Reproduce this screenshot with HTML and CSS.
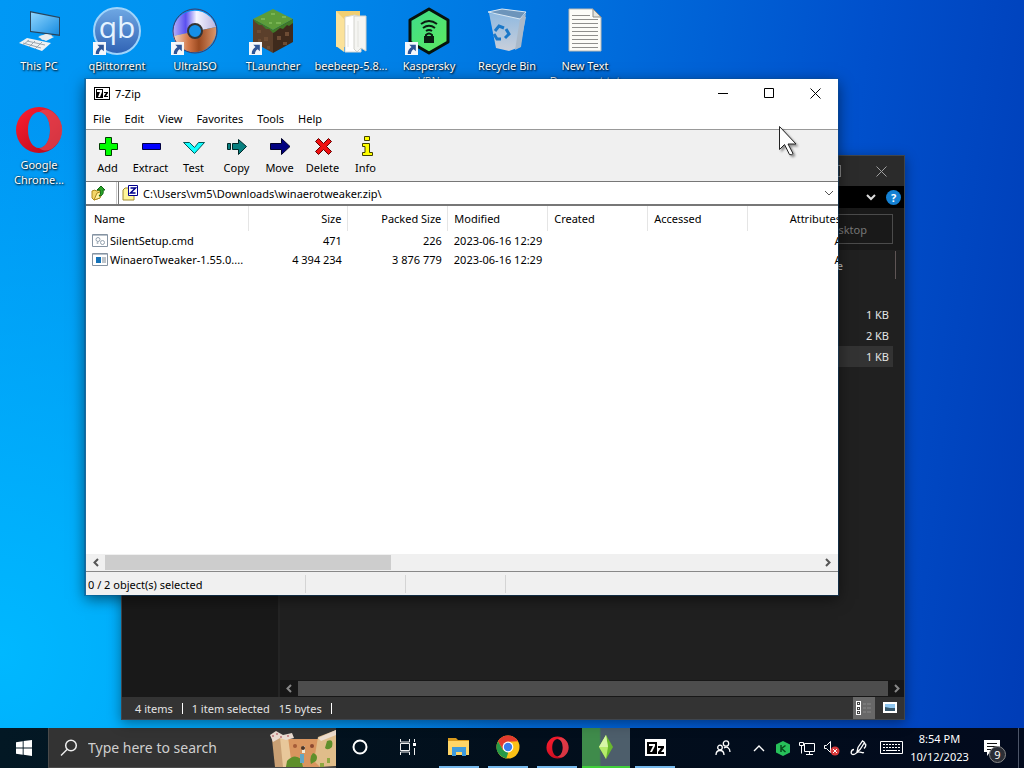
FILE: index.html
```html
<!DOCTYPE html>
<html lang="en">
<head>
<meta charset="utf-8">
<title>Desktop</title>
<link rel="stylesheet" href="styles.css">
</head>
<body class="screen">
<svg class="defs" aria-hidden="true">
  <defs>
    <linearGradient id="monitor" x1="0" y1="0" x2="1" y2="1"><stop offset="0" stop-color="#8fd6ff"/><stop offset="1" stop-color="#168be0"/></linearGradient>
    <linearGradient id="qbg" x1="0" y1="0" x2="0" y2="1"><stop offset="0" stop-color="#6fa8e4"/><stop offset="1" stop-color="#2f62b4"/></linearGradient>
    <linearGradient id="operag" x1="0" y1="0" x2="1" y2="1"><stop offset="0" stop-color="#ff1f30"/><stop offset="1" stop-color="#b0061a"/></linearGradient>
    <linearGradient id="discTop" x1="0" y1="0" x2="1" y2="0"><stop offset="0" stop-color="#b9b4fa"/><stop offset=".3" stop-color="#5a4ff0"/><stop offset=".55" stop-color="#f4f4ff"/><stop offset="1" stop-color="#b9b4df"/></linearGradient>
    <linearGradient id="discLow" x1="0" y1="0" x2="1" y2="0"><stop offset="0" stop-color="#f3ddd2"/><stop offset=".35" stop-color="#d4794a"/><stop offset=".6" stop-color="#9c4a20"/><stop offset="1" stop-color="#d9976d"/></linearGradient>
    <linearGradient id="kasp" x1="0" y1="0" x2="1" y2="1"><stop offset="0" stop-color="#3ddc8c"/><stop offset="1" stop-color="#5fe85c"/></linearGradient>
    <linearGradient id="bin" x1="0" y1="0" x2="0" y2="1"><stop offset="0" stop-color="#8fb9e0"/><stop offset="1" stop-color="#c9cfda"/></linearGradient>
    <symbol id="shortcut" viewBox="0 0 12 12"><rect width="12" height="12" fill="#f4f7fb"/><path d="M4 2.500h6v6L8 6.600C6.500 7.500 5.500 9 5.500 11H2.500C2.500 8 4 6 6 4.700z" fill="#2f5597"/></symbol>
    <symbol id="opera" viewBox="0 0 48 48"><path fill-rule="evenodd" fill="url(#operag)" d="M24 1a23 23 0 1 0 0 46 23 23 0 1 0 0-46zM24 6c6.500 0 11 8 11 18s-4.500 18-11 18-11-8-11-18 4.500-18 11-18z"/><path fill="#e8545c" opacity=".6" d="M24 6c5-4 11-3 15 1 11 9 11 25 0 34-4 4-10 5-15 1 6.500 0 11-8 11-18S30.500 6 24 6z"/></symbol>
    <symbol id="sevenzip" viewBox="0 0 16 13"><rect width="16" height="13" fill="#000"/><rect x="1" y="1" width="14" height="11" fill="#fff"/><rect x="2" y="2" width="7" height="9" fill="#000"/><path d="M3 3h5v2L6 10H4l2-5H3z" fill="#fff"/><path d="M10 5h4v1l-2 3h2v1h-4V9l2-3h-2z" fill="#000"/></symbol>
    <symbol id="sevenzipBare" viewBox="0 0 21 17"><rect width="21" height="17" fill="#fff"/><rect x="2" y="3" width="10" height="12" fill="#000"/><path d="M4 5h6v2l-3 6H5l3-6H4z" fill="#fff"/><path d="M13 7h6v2l-3 4h3v2h-6v-2l3-4h-3z" fill="#000"/></symbol>
  </defs>
</svg>

<main class="desktop">
  <div class="icons">
    <a class="shortcut" href="#pc"><svg class="pic" viewBox="0 0 48 48"><path d="M15 4l30 6v19l-30-4z" fill="#28455d"/><path d="M16 5.500l28 5.500v16.500L16 24z" fill="url(#monitor)"/><path d="M24 29l8-2 5 1-2 4-8 1z" fill="#cfd6dc"/><path d="M23 30l8-3 8 3-8 4z" fill="#e8ecef"/><path d="M4 36l8-5 24 5-9 8z" fill="#eef1f3"/><path d="M8 36l18 5M12 34l18 4M14 33l-6 5M20 34l-6 6M27 35l-7 7" stroke="#9aa6b0"/></svg><span>This PC</span></a>
    <a class="shortcut" href="#qb"><svg class="pic" viewBox="0 0 48 48"><circle cx="24" cy="24" r="23" fill="url(#qbg)" stroke="#9fd4fb" stroke-width="2"/><text x="24" y="31" class="qb">qb</text><use href="#shortcut" x="0" y="35" width="13" height="13"/></svg><span>qBittorrent</span></a>
    <a class="shortcut" href="#iso"><svg class="pic" viewBox="0 0 48 48"><path d="M2 29a22 22 0 0 1 43-9z" fill="url(#discTop)"/><path d="M2 29l43-9a22 22 0 0 1-43 9z" fill="url(#discLow)"/><circle cx="24" cy="24" r="22" fill="none" stroke="#3f3a66"/><circle cx="24" cy="24" r="7" fill="#148fe8" stroke="#333" stroke-width="2"/><use href="#shortcut" x="0" y="35" width="13" height="13"/></svg><span>UltraISO</span></a>
    <a class="shortcut" href="#tl"><svg class="pic" viewBox="0 0 48 48"><path d="M4 12l20 11v23L4 35z" fill="#5b3f2b"/><path d="M44 12L24 23v23l20-11z" fill="#3f2a1c"/><path d="M24 2l20 10-20 11L4 12z" fill="#5c9c3a"/><path d="M4 12l20 11 20-11v4l-4 3-2-1-4 4-3-1-5 4-2 1-4-4-3 0-4-4-3 0-4-3z" fill="#3f7a28"/><path d="M12 11h4v2h-4zM22 6h4v2h-4zM27 15h5v2h-5zM20 15h3v2h-3zM33 9h4v2h-4z" fill="#78b452"/><path d="M8 23h4v3H8zM15 30h4v4h-4zM9 32h3v3H9zM28 29h4v4h-4zM36 25h4v4h-4zM18 39h3v3h-3zM34 35h4v3h-4z" fill="#6d4c34"/><use href="#shortcut" x="0" y="35" width="13" height="13"/></svg><span>TLauncher</span></a>
    <a class="shortcut" href="#bee"><svg class="pic" viewBox="0 0 48 48"><path d="M9 4h24v36H9z" fill="#f1cf72"/><path d="M18 10l10-2 6 3v34H18z" fill="#fff" stroke="#d7d7d2"/><path d="M27 9h12v35l-5-3-4 4-3-3z" fill="#f5f5f2" stroke="#d2d2cc"/><path d="M21 18v22M31 14v26" stroke="#e2e2dd"/><path d="M9 4l8 8v33l-8-6z" fill="#fbe29a"/></svg><span>beebeep-5.8...</span></a>
    <a class="shortcut" href="#vpn"><svg class="pic" viewBox="0 0 48 48"><path d="M24 2l19 11v22L24 46 5 35V13z" fill="url(#kasp)" stroke="#07120c" stroke-width="3" stroke-linejoin="round"/><path d="M16 17q8-6 16 0M18 21q6-4.500 12 0M21 24q3-2 6 0" fill="none" stroke="#0a1b11" stroke-width="2"/><path d="M21 30v-2q3-3 6 0v2" fill="none" stroke="#0a1b11" stroke-width="2"/><rect x="19" y="29" width="10" height="7" fill="#0a1b11"/><use href="#shortcut" x="0" y="35" width="13" height="13"/></svg><span>Kaspersky VPN</span></a>
    <a class="shortcut" href="#bin"><svg class="pic" viewBox="0 0 48 48"><path d="M6 6l37 4-6 30-11 4-13-3z" fill="url(#bin)"/><path d="M5 5l14-3 24 3-6 7z" fill="#6d95bb" stroke="#dbe8f3"/><path d="M37 12l6-6-5 34-6 3z" fill="#aab9c9"/><g fill="none" stroke="#1b78c8" stroke-width="3"><path d="M12 24l4-5 5 2M23 22l3 5-4 4M18 32h-4l-3-5"/></g></svg><span>Recycle Bin</span></a>
    <a class="shortcut" href="#txt"><svg class="pic" viewBox="0 0 48 48"><path d="M8 2h24l8 8v34H8z" fill="#fcfcf8" stroke="#b9b9b2"/><path d="M32 2v8h8z" fill="#e4e4de" stroke="#8d8d88"/><path d="M11 8.500h18M11 12.500h26M11 16.500h26M11 20.500h26M11 24.500h26M11 28.500h26M11 32.500h26M11 36.500h26M11 40.500h26" stroke="#8f8f8d"/></svg><span>New Text Document.txt</span></a>
    <a class="shortcut" href="#chrome"><svg class="pic" viewBox="0 0 48 48"><use href="#opera"/></svg><span>Google Chrome...</span></a>
  </div>

  <section class="explorer" aria-label="File Explorer">
    <header class="ex-title"><button class="ex-max" aria-label="Maximize"></button><button class="ex-close" aria-label="Close"><svg width="11" height="11" viewBox="0 0 11 11"><path d="M.5.5l10 10M10.500.5l-10 10" stroke="#a0a0a0"/></svg></button></header>
    <div class="ex-ribbon"><svg width="10" height="7" viewBox="0 0 10 7"><path d="M1 1l4 4 4-4" fill="none" stroke="#ddd" stroke-width="2"/></svg><button class="help" aria-label="Help">?</button></div>
    <div class="ex-nav"><input class="ex-search" aria-label="Search" placeholder="Search Desktop"></div>
    <div class="ex-body">
      <aside class="ex-side"></aside>
      <div class="ex-files">
        <div class="ex-head"><span>Size</span></div>
        <ul class="ex-list"><li>1 KB</li><li>2 KB</li><li class="picked">1 KB</li></ul>
        <div class="ex-scroll"><svg width="6" height="9" viewBox="0 0 6 9"><path d="M5 1L1.500 4.500 5 8" fill="none" stroke="#888" stroke-width="2"/></svg><i></i><svg width="6" height="9" viewBox="0 0 6 9"><path d="M1 1l3.500 3.500L1 8" fill="none" stroke="#888" stroke-width="2"/></svg></div>
      </div>
    </div>
    <footer class="ex-status"><span>4 items</span><b></b><span>1 item selected</span><span>15 bytes</span><b></b>
      <div class="views"><button class="view on" aria-label="Details view"><svg width="16" height="14" viewBox="0 0 16 14"><path d="M0 0h5v14H0z" fill="#fff"/><path d="M1 1h3v3H1zM1 6h3v3H1zM1 10h3v3H1z" fill="#444"/><path d="M2 2h1v1H2zM2 7h1v1H2zM2 11h1v1H2z" fill="#fff"/><path d="M7 3h3M11 3h4M7 7h3M11 7h4M7 11h3M11 11h4" stroke="#888"/></svg></button><button class="view" aria-label="Large icons"><svg width="14" height="12" viewBox="0 0 14 12"><path d="M0 0h14v11H0z" fill="#fff"/><path d="M2 2h10v7H2z" fill="#8ec5ef"/><path d="M2 5l5 1 5 0v3H2z" fill="#35566b"/></svg></button></div>
    </footer>
  </section>

  <section class="zip" aria-label="7-Zip">
    <header class="title"><svg width="16" height="13"><use href="#sevenzip"/></svg><h1>7-Zip</h1>
      <button aria-label="Minimize"><svg width="11" height="11"><path d="M0 5.500h10" stroke="#000"/></svg></button>
      <button aria-label="Maximize"><svg width="11" height="11"><path d="M.5.5h9v9h-9z" fill="none" stroke="#000"/></svg></button>
      <button aria-label="Close"><svg width="11" height="11"><path d="M.5.5l10 10M10.500.5l-10 10" stroke="#000"/></svg></button>
    </header>
    <nav class="menu"><button>File</button><button>Edit</button><button>View</button><button>Favorites</button><button>Tools</button><button>Help</button></nav>
    <div class="tools">
      <button><svg viewBox="0 0 24 24"><path d="M9.500 2.500h6v6h6v6h-6v6h-6v-6h-6v-6h6z" fill="#0f0" stroke="#003c00"/></svg>Add</button>
      <button><svg viewBox="0 0 24 24"><path d="M3.500 8.500h18v6h-18z" fill="#00f" stroke="#000040"/></svg>Extract</button>
      <button><svg viewBox="0 0 24 24"><path d="M1.500 7.500h6l5 5 4-5h6l-10 11z" fill="#1ff" stroke="#005858"/></svg>Test</button>
      <button><svg viewBox="0 0 24 24"><path d="M2.500 8.500h3v6h-3zM7.500 8.500h6v-4l8 7-8 8v-5h-6z" fill="#088080" stroke="#002828"/></svg>Copy</button>
      <button><svg viewBox="0 0 24 24"><path d="M2.500 8.500h11v-5l8.500 8-8.500 8v-5h-11z" fill="#000080" stroke="#000028"/></svg>Move</button>
      <button><svg viewBox="0 0 24 24"><path d="M7.500 3.500l5 5 5-5 3 3-5 5 5 5-3 3-5-5-5 5-3-3 5-5-5-5z" fill="#f01010" stroke="#600000"/></svg>Delete</button>
      <button><svg viewBox="0 0 24 24"><path d="M10.500 1.500h5v4h-5zM8.500 8.500h7v9h3v3H8.500v-3h2.500v-6H8.500z" fill="#ff0" stroke="#404000"/></svg>Info</button>
    </div>
    <div class="address">
      <button class="up" aria-label="Up one level"><svg width="15" height="16" viewBox="0 0 15 16"><path d="M1 6l3-1 1 1 4-1v8l-6 2-2-2z" fill="#f3d669" stroke="#b08a1c"/><path d="M3 15l3-7 6-2-3 7z" fill="#ffef9c" stroke="#b08a1c"/><path d="M8 11c2-2 2-4 1-6H6l4-4 4 4h-2c1 4-1 6-4 6z" fill="#2aa52a" stroke="#116611"/></svg></button>
      <label class="combo"><svg width="17" height="16" viewBox="0 0 17 16"><path d="M1 5l2-2h3l1 1h5v11H1z" fill="#fff59a" stroke="#a08a30"/><path d="M6.500.5h9v10h-9z" fill="#fff" stroke="#00008c"/><path d="M8.500 3h5l-5 5h5" fill="none" stroke="#00008c" stroke-width="1.500"/></svg><input class="path" aria-label="Path" value="C:\Users\vm5\Downloads\winaerotweaker.zip\"><svg width="10" height="6" viewBox="0 0 10 6"><path d="M1 1l4 4 4-4" fill="none" stroke="#555"/></svg></label>
    </div>
    <div class="list">
      <table class="files">
        <colgroup><col class="c-name"><col class="c-size"><col><col><col><col><col></colgroup>
        <thead><tr><th>Name</th><th class="num">Size</th><th class="num">Packed Size</th><th>Modified</th><th>Created</th><th>Accessed</th><th class="num">Attributes</th></tr></thead>
        <tbody>
          <tr><td><svg width="16" height="13" viewBox="0 0 16 13"><path d="M.5.500h15v12H.5z" fill="#fff" stroke="#8593a2"/><path d="M1 1.500h14" stroke="#b9c2cb"/><circle cx="6" cy="5.500" r="2" fill="none" stroke="#93a1ae"/><circle cx="10.500" cy="8.500" r="2" fill="none" stroke="#93a1ae"/><circle cx="5.500" cy="9" r="1" fill="#a9b4be"/></svg>SilentSetup.cmd</td><td class="num">471</td><td class="num">226</td><td>2023-06-16 12:29</td><td></td><td></td><td class="num">A</td></tr>
          <tr><td><svg width="16" height="13" viewBox="0 0 16 13"><path d="M.5.500h15v12H.5z" fill="#fff" stroke="#8593a2"/><path d="M1 1.500h14" stroke="#b9c2cb"/><path d="M4 4h5v6H4z" fill="#1472b8"/><path d="M10 5h4M10 7h4M10 9h4" stroke="#7b8894"/></svg>WinaeroTweaker-1.55.0....</td><td class="num">4 394 234</td><td class="num">3 876 779</td><td>2023-06-16 12:29</td><td></td><td></td><td class="num">A</td></tr>
        </tbody>
      </table>
    </div>
    <div class="scroll"><svg width="6" height="9" viewBox="0 0 6 9"><path d="M5 1L1.500 4.500 5 8" fill="none" stroke="#555" stroke-width="2"/></svg><div class="track"><i></i></div><svg width="6" height="9" viewBox="0 0 6 9"><path d="M1 1l3.500 3.500L1 8" fill="none" stroke="#555" stroke-width="2"/></svg></div>
    <footer class="status"><span class="sel">0 / 2 object(s) selected</span><span></span><span></span></footer>
  </section>

  <svg class="cursor" width="24" height="34" viewBox="0 0 24 34"><path d="M1.500 1.500v23l5-5 5 10q2 1 3.500-1l-5-9.500h8z" fill="#fff" stroke="#222"/></svg>
</main>

<footer class="taskbar">
  <button class="start" aria-label="Start"><svg width="16" height="16" viewBox="0 0 16 16"><path d="M0 2.200l6.700-1v6.300H0zM7.600 1.100L16 0v7.500H7.600zM0 8.400h6.700v6.300L0 13.800zM7.600 8.400H16V16l-8.400-1.200z" fill="#fff"/></svg></button>
  <label class="search"><svg width="18" height="18" viewBox="0 0 18 18"><circle cx="11" cy="6.500" r="5.300" fill="none" stroke="#eee" stroke-width="1.500"/><path d="M7 10.500L1 16.500" stroke="#eee" stroke-width="1.500"/></svg><input class="query" aria-label="Search" placeholder="Type here to search">
    <svg class="art" width="66" height="38" viewBox="0 0 66 38"><path d="M12 10h46l-5 28H15z" fill="#d9955f"/><path d="M2 10q8-6 13-2l4 30H5z" fill="#c9a074"/><path d="M10 8h8l4 30h-9z" fill="#e8c79a"/><path d="M0 6l6-4 7 4 9-2 2 5-8 2-6-2-7 4z" fill="#eadbd0"/><path d="M2 6h2v2H2zM6 4h2v2H6zM10 7h2v2h-2zM17 6h2v2h-2z" fill="#c98f8f"/><path d="M48 8l18-7v36l-16 1-6-6z" fill="#e0bd8a"/><path d="M48 9l18-8v5l-15 6z" fill="#eddccd"/><path d="M57 12q7-3 5 6-4 4-7 1zM43 24q6 2 3 8l-5 3q-2-7 2-11zM17 32q7-8 14-2l2 8H16z" fill="#5f8f2b"/><path d="M32 17h3v7h-3z" fill="#f0ead9"/><path d="M30 25h4v9h-4z" fill="#62a6c5"/><circle cx="33" cy="19" r="2" fill="#4b3326"/><circle cx="42" cy="17" r="2" fill="#8c4830"/><circle cx="25" cy="17" r="2" fill="#a65c38"/><path d="M50 34h4v4h-4zM57 29h3v5h-3z" fill="#8da740"/></svg></label>
  <button class="tb" aria-label="Cortana"><svg width="18" height="18" viewBox="0 0 18 18"><circle cx="9" cy="9" r="6.500" fill="none" stroke="#fff" stroke-width="2"/></svg></button>
  <button class="tb" aria-label="Task view"><svg width="18" height="18" viewBox="0 0 18 18"><path d="M1.500 1v3h9V1M1.500 17v-3h9v3M1.500 5.500h9v7h-9zM15.500 1v3M15.500 10v7" fill="none" stroke="#eee"/><path d="M14 5h3v3h-3z" fill="#fff"/></svg></button>
  <div class="apps">
    <button class="tb run" aria-label="File Explorer"><svg width="24" height="22" viewBox="0 0 24 22"><path d="M1 2h8l2 2h11v15H1z" fill="#d99a1d"/><path d="M1 5h21v14H1z" fill="#ffd566"/><path d="M5 11h14v9h-4v-4H9v4H5z" fill="#3f9bdc"/></svg></button>
    <button class="tb run" aria-label="Chrome"><svg width="24" height="24" viewBox="0 0 24 24"><circle cx="12" cy="12" r="11.500" fill="#fbc116"/><path d="M2 6.300A11.500 11.500 0 0 1 22 6.300L12 6.800 7 14.800z" fill="#e33b2e"/><path d="M2 6.300l5 8.600 5.300 2.600-2 5.900A11.500 11.500 0 0 1 2 6.300z" fill="#269947"/><circle cx="12" cy="12" r="5.400" fill="#fff"/><circle cx="12" cy="12" r="4.200" fill="#3a7cec"/></svg></button>
    <button class="tb run" aria-label="Opera"><svg width="23" height="23" viewBox="0 0 48 48"><use href="#opera"/></svg></button>
    <button class="tb active" aria-label="The Sims"><svg width="16" height="24" viewBox="0 0 16 24"><path d="M8 0l7 12-7 12L1 12z" fill="#69b82e"/><path d="M8 0l2 12-2 12-7-12z" fill="#b6ea6b"/><path d="M8 0l2 12H1z" fill="#d7f5a7"/></svg></button>
    <button class="tb run" aria-label="7-Zip"><svg width="21" height="17"><use href="#sevenzipBare"/></svg></button>
  </div>
  <div class="tray">
    <button class="wide" aria-label="People"><svg width="16" height="16" viewBox="0 0 16 16"><g fill="none" stroke="#fff" stroke-width="1.300"><circle cx="11" cy="3.500" r="2.700"/><circle cx="5" cy="7.500" r="2.300"/><path d="M1 15c0-6 8-6 8 0M9 8c3-2 6 0 6 4"/></g></svg></button>
    <button aria-label="Show hidden icons"><svg width="12" height="8" viewBox="0 0 12 8"><path d="M1 7l5-5 5 5" fill="none" stroke="#fff" stroke-width="1.400"/></svg></button>
    <button aria-label="Kaspersky"><svg width="14" height="15" viewBox="0 0 14 15"><path d="M7 0l7 3.500v8L7 15l-7-3.500v-8z" fill="#27c05a"/><path d="M5 4v7M9.500 4.500L5.500 7.500l4 3.500" fill="none" stroke="#064a1c" stroke-width="1.500"/></svg></button>
    <button aria-label="Network"><svg width="17" height="15" viewBox="0 0 17 15"><path d="M5.500 2.500h10v8h-10zM10.500 10.500v3M7 13.500h7M.5 1.500h4v3h-4zM2.500 4.500v8" fill="none" stroke="#fff"/></svg></button>
    <button aria-label="Volume muted"><svg width="17" height="16" viewBox="0 0 17 16"><path d="M1.500 5.500h2l4-4v11l-4-4h-2z" fill="none" stroke="#fff"/><circle cx="12" cy="11" r="4.500" fill="#d8393b"/><path d="M10 9l4 4M14 9l-4 4" stroke="#fff"/></svg></button>
    <button class="pen" aria-label="Windows Ink"><svg width="18" height="16" viewBox="0 0 18 16"><path d="M4 9.500c-3 0-4 5-1 5s3-2 5-2.500c3-.5 4 1.500 6 .5M7 12l1-4.500L12.500 1l2 1.500L10 9.500zM13.500 4c3-1 3 2 .5 4.500" fill="none" stroke="#fff" stroke-width="1.300"/></svg></button>
    <button class="pen" aria-label="Touch keyboard"><svg width="23" height="14" viewBox="0 0 23 14"><path d="M.5.500h22v12H.5z" fill="none" stroke="#fff"/><path d="M3 3.500h17M3 6.500h17" stroke="#fff" stroke-dasharray="2 1"/><path d="M3 9.500h2M6 9.500h11M18 9.500h2" stroke="#fff"/></svg></button>
    <div class="clock"><time>8:54 PM</time><time>10/12/2023</time></div>
    <button class="notes" aria-label="Notifications"><svg width="17" height="16" viewBox="0 0 17 16"><path d="M0 0h16v12H6l-3 4v-4H0z" fill="#fff"/><path d="M3 3.500h10M3 6.500h10M3 9.500h6" stroke="#111"/></svg><span class="badge">9</span></button>
    <span class="peek"></span>
  </div>
</footer>
</body>
</html>
```

FILE: styles.css
```css
* { box-sizing: border-box; }
.screen {
  margin: 0;
  height: 100vh;
  display: flex;
  flex-direction: column;
  overflow: hidden;
  font: 11px/15px "Noto Sans", "Open Sans", sans-serif;
  color: #000;
  background:
    radial-gradient(ellipse 50% 70% at 0 85%, #00b8ff, #00b8ff00),
    linear-gradient(97deg, #0098f5 0, #0092f0 18%, #0072df 50%, #0050cc 78%, #003cb6 100%);
}
.defs { position: absolute; width: 0; height: 0; }
svg { flex: none; }
button { border: 0; padding: 0; margin: 0; background: none; color: inherit; font: inherit; display: flex; align-items: center; justify-content: center; }
input { border: 0; padding: 0; min-width: 0; background: none; color: inherit; font: inherit; outline: 0; }

.desktop { flex: 1; position: relative; min-height: 0; }
.icons { display: grid; grid-template-columns: repeat(8, 78px); grid-auto-rows: 99px; }
.shortcut { display: flex; flex-direction: column; align-items: center; gap: 3px; padding: 7px 0 0; color: #fff; text-align: center; text-decoration: none; text-shadow: 1px 1px 2px #000, 0 0 2px #0008; }
.shortcut span { max-width: 76px; }
.pic { width: 48px; height: 48px; }
.qb { font: 30px "Open Sans", sans-serif; fill: #e5f3ff; text-anchor: middle; text-shadow: none; }

.explorer {
  position: absolute; left: 121px; top: 155px; right: 119px; bottom: 8px;
  display: flex; flex-direction: column;
  background: #202020; color: #e4e4e4; border: 1px solid #3f454d;
  box-shadow: 0 3px 12px #0006;
}
.ex-title { height: 30px; display: flex; justify-content: flex-end; background: #2b2b2b; }
.ex-title button { width: 46px; }
.ex-max::before { content: ""; width: 10px; height: 10px; border: 1px solid #888; }
.ex-ribbon { height: 22px; display: flex; align-items: center; justify-content: flex-end; gap: 10px; padding-right: 3px; background: #000; }
.help { width: 15px; height: 15px; border-radius: 50%; background: #1481d4; color: #fff; font-weight: 700; }
.ex-nav { height: 42px; display: flex; justify-content: flex-end; align-items: center; padding-right: 11px; background: #191919; }
.ex-search { width: 170px; height: 30px; border: 1px solid #4b4b4b; text-align: right; padding-right: 25px; }
.ex-search::placeholder { color: #777; opacity: 1; }
.ex-body { flex: 1; display: flex; min-height: 0; }
.ex-side { width: 158px; background: #191919; border-right: 2px solid #242424; }
.ex-files { flex: 1; display: flex; flex-direction: column; }
.ex-head { height: 28px; margin: 1px 8px 0 0; padding: 7px 52px 0 0; border-right: 1px solid #5f5555; text-align: right; color: #c4c4c4; }
.ex-list { flex: 1; list-style: none; margin: 25px 11px 0 0; padding: 0; text-align: right; }
.ex-list li { line-height: 21px; padding-right: 4px; }
.picked { background: #333; }
.ex-scroll { height: 17px; display: flex; align-items: center; gap: 6px; padding: 0 4px 0 6px; background: #171717; }
.ex-scroll i { flex: 1; height: 15px; background: #4d4d4d; }
.ex-status { height: 22px; display: flex; align-items: center; padding-left: 13px; gap: 9px; background: #333; }
.ex-status b { width: 1px; height: 11px; background: #fff; }
.views { display: flex; gap: 4px; margin-left: auto; padding-right: 3px; }
.view { width: 22px; height: 22px; }
.view.on { background: #686868; }

.zip {
  position: absolute; left: 85px; top: 79px; right: 186px; bottom: 133px;
  display: flex; flex-direction: column; overflow: hidden;
  background: #fff; border-left: 1px solid #1c6a9c;
  box-shadow: 0 0 0 1px #0d4f8a66, 0 4px 14px #0008;
}
.title { height: 29px; display: flex; align-items: center; padding-left: 8px; }
.title h1 { flex: 1; margin: 0 0 0 5px; font: inherit; }
.title button { width: 46px; height: 29px; }
.menu { height: 22px; display: flex; align-items: center; border-bottom: 1px solid #999; }
.menu button { padding: 0 7px; height: 20px; }
.tools { height: 52px; display: flex; background: #f0f0f0; border-bottom: 1px solid #777; }
.tools button { width: 43px; flex-direction: column; justify-content: flex-start; gap: 1px; padding-top: 5px; }
.tools svg { width: 24px; height: 24px; }
.address { height: 24px; display: flex; align-items: stretch; border-bottom: 2px solid #777; }
.up { width: 31px; padding-right: 6px; border-right: 1px solid #ccc; }
.combo { flex: 1; display: flex; align-items: center; margin-left: 1px; padding: 0 4px 0 3px; gap: 4px; border-left: 1px solid #777; }
.path { flex: 1; }
.list { flex: 1; overflow: hidden; }
.files { table-layout: fixed; width: 762px; border-collapse: collapse; }
.c-name { width: 162px; }
.files th, .files td { padding: 0 6px; text-align: left; white-space: nowrap; font-weight: 400; }
.files th { height: 25px; border-right: 1px solid #e5e5e5; }
.files th:first-child { padding-left: 8px; }
.files td { height: 19px; }
.files td:first-child { padding: 0 0 0 6px; }
.files td svg { vertical-align: -2px; margin-right: 2px; }
.files .num { text-align: right; }
.scroll { height: 18px; display: flex; align-items: center; gap: 6px; padding: 0 7px; background: #f0f0f0; border-bottom: 1px solid #888; }
.track { flex: 1; }
.track i { display: block; width: 40%; height: 15px; background: #cdcdcd; }
.status { height: 23px; display: flex; align-items: center; background: #f0f0f0; }
.status span { width: 100px; height: 18px; border-right: 1px solid #d4d4d4; }
.status .sel { width: 220px; line-height: 20px; padding-left: 2px; }

.cursor { position: absolute; left: 778px; top: 125px; filter: drop-shadow(2px 2px 1px #0006); }

.taskbar { height: 40px; display: flex; color: #fff; background: linear-gradient(90deg, #031824, #020f1c 50%, #020a1d); }
.start { width: 48px; }
.search { width: 288px; display: flex; align-items: center; padding-left: 11px; gap: 10px; background: #333; border: 1px solid #4a4a4a; border-width: 0 0 1px 1px; font-size: 14px; line-height: 20px; color: #d0d0d0; }
.query { flex: 1; height: 24px; }
.query::placeholder { color: #cfcfcf; opacity: 1; }
.art { align-self: flex-end; }
.tb { width: 48px; height: 40px; border-bottom: 2px solid transparent; }
.apps { display: flex; gap: 1px; margin-left: 3px; }
.run { position: relative; }
.run::after { content: ""; position: absolute; left: 4px; right: 4px; bottom: -2px; height: 2px; background: #76b9ed; }
.active { background: linear-gradient(90deg, #3f8b4b 36%, #4d5e6b 40%); border-bottom-color: #40d03a; }
.tray { display: flex; margin-left: auto; }
.tray button { width: 24px; }
.tray .wide { width: 48px; }
.tray .pen { width: 32px; }
.clock { width: 65px; display: flex; flex-direction: column; align-items: center; padding-top: 2px; line-height: 18px; }
.tray .notes { width: 46px; padding-right: 6px; position: relative; }
.badge { position: absolute; left: 17px; top: 18px; width: 17px; height: 17px; border-radius: 50%; border: 1px solid #888; background: #2b2e36; line-height: 15px; }
.peek { width: 6px; border-left: 1px solid #4c5568; }
```
